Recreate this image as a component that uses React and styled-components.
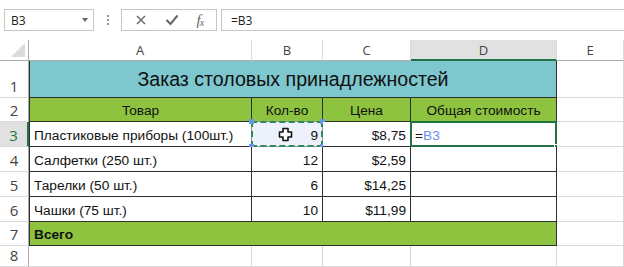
import React from "react";
import styled, { createGlobalStyle, css } from "styled-components";

const Global = createGlobalStyle`
  html, body { margin: 0; padding: 0; background: #fff; }
  body { font-family: "Liberation Sans", Arial, sans-serif; overflow: hidden; }
  * { box-sizing: border-box; }
`;

const Page = styled.div`
  width: 624px;
  height: 267px;
  overflow: hidden;
  background: #fff;
`;

/* ---------- formula bar ---------- */
const FormulaBar = styled.div`
  height: 40px;
  display: flex;
  align-items: flex-start;
  padding: 9px 0 0 4px;
`;

const NameBox = styled.div`
  width: 90px;
  height: 22px;
  border: 1px solid #c6c6c6;
  display: flex;
  align-items: center;
  justify-content: space-between;
  padding: 0 5px 0 6px;
  font-family: "Open Sans", "Liberation Sans", sans-serif;
  font-size: 12px;
  color: #222;
`;

const Caret = styled.span`
  width: 0;
  height: 0;
  border-left: 3.5px solid transparent;
  border-right: 3.5px solid transparent;
  border-top: 4px solid #666;
`;

const Grip = styled.div`
  width: 27px;
  height: 22px;
  display: flex;
  flex-direction: column;
  align-items: center;
  justify-content: center;
  gap: 2px;
  & > i { width: 2px; height: 2px; background: #9a9a9a; display: block; }
`;

const ButtonGroup = styled.div`
  width: 96px;
  height: 22px;
  border: 1px solid #c6c6c6;
  display: flex;
  align-items: center;
  justify-content: space-around;
  padding: 0 4px;
  color: #666;
`;

const Fx = styled.span`
  font-family: "Liberation Serif", serif;
  font-style: italic;
  font-size: 15px;
  line-height: 1;
  color: #666;
  letter-spacing: -1px;
  & sub { font-size: 10px; vertical-align: -1px; }
`;

const FormulaInput = styled.div`
  flex: 1;
  margin-left: 4px;
  height: 22px;
  border: 1px solid #c6c6c6;
  border-right: none;
  display: flex;
  align-items: center;
  padding-left: 9px;
  font-family: "Open Sans", "Liberation Sans", sans-serif;
  font-size: 12px;
  color: #222;
`;

/* ---------- sheet grid ---------- */
const Sheet = styled.div`
  display: grid;
  grid-template-columns: 29px 223px 71px 88px 146px 67px;
  grid-template-rows: 21px 37px 24px 25px 25px 25px 25px 24px 21px;
`;

const ColHead = styled.div`
  position: relative;
  display: flex;
  align-items: center;
  justify-content: center;
  font-family: "Open Sans", "Liberation Sans", sans-serif;
  font-size: 13px;
  color: #444;
  background: ${(p) => (p.$active ? "#e1e1e1" : "#fff")};
  border-right: 1px solid #dadada;
  border-bottom: ${(p) => (p.$active ? "2px solid #217346" : "1px solid #ababab")};
`;

const Corner = styled(ColHead)`
  align-items: flex-end;
  justify-content: flex-end;
  padding: 0 3px 3px 0;
  border-right: 1px solid #ababab;
`;

const RowHead = styled.div`
  display: flex;
  align-items: flex-end;
  justify-content: center;
  padding-bottom: 1px;
  font-family: "Open Sans", "Liberation Sans", sans-serif;
  font-size: 15px;
  color: ${(p) => (p.$active ? "#217346" : "#444")};
  background: ${(p) => (p.$active ? "#e1e1e1" : "#fff")};
  border-right: ${(p) => (p.$active ? "2px solid #217346" : "1px solid #ababab")};
  border-bottom: 1px solid #dadada;
`;

const dark = "#2f2f2f";

const Cell = styled.div`
  position: relative;
  display: flex;
  align-items: flex-end;
  padding: 0 4px 3px 4px;
  font-size: 13.7px;
  color: #111;
  white-space: nowrap;
  grid-column: ${(p) => p.$span || "auto"};
  justify-content: ${(p) =>
    p.$align === "right" ? "flex-end" : p.$align === "center" ? "center" : "flex-start"};
  background: ${(p) => p.$bg || "#fff"};
  border-right: 1px solid ${(p) => (p.$table ? dark : "#d9d9d9")};
  border-bottom: 1px solid ${(p) => (p.$table ? dark : "#d9d9d9")};
  ${(p) => p.$first && css`border-left: 1px solid ${dark};`}
  ${(p) => p.$bold && css`font-weight: bold;`}
`;

const Title = styled(Cell)`
  justify-content: center;
  font-size: 19.6px;
  padding-bottom: 6px;
`;

const Copy = styled.span`
  position: absolute;
  left: -1px;
  top: -1px;
  right: -1px;
  bottom: -1px;
  border: 2px dashed #2f8a5a;
  background: rgba(220, 230, 250, 0.55);
  pointer-events: none;
`;

const Handle = styled.span`
  position: absolute;
  width: 5px;
  height: 5px;
  background: #6b98e6;
  ${(p) => (p.$top ? "top: -3px;" : "bottom: -3px;")}
  ${(p) => (p.$left ? "left: -3px;" : "right: -3px;")}
`;

const Selected = styled.span`
  position: absolute;
  left: -1px;
  top: -1px;
  right: -1px;
  bottom: -1px;
  border: 2px solid #217346;
  pointer-events: none;
`;

const FillHandle = styled.span`
  position: absolute;
  right: -3px;
  bottom: -3px;
  width: 5px;
  height: 5px;
  background: #217346;
  border: 1px solid #fff;
`;

const Ref = styled.span`
  color: #6c8ef0;
`;

const Value = styled.span`
  position: relative;
`;

const Cursor = styled.svg`
  position: absolute;
  left: 26px;
  top: 5px;
`;

const tableRows = [
  ["Салфетки (250 шт.)", "12", "$2,59"],
  ["Тарелки (50 шт.)", "6", "$14,25"],
  ["Чашки (75 шт.)", "10", "$11,99"],
];

export default function App() {
  return (
    <Page>
      <Global />
      <FormulaBar>
        <NameBox>
          B3
          <Caret />
        </NameBox>
        <Grip>
          <i />
          <i />
          <i />
        </Grip>
        <ButtonGroup>
          <svg width="12" height="12" viewBox="0 0 12 12">
            <path d="M2 2 L10 10 M10 2 L2 10" stroke="#666" strokeWidth="1.4" />
          </svg>
          <svg width="14" height="12" viewBox="0 0 14 12">
            <path d="M1.5 6 L5.5 10 L12.5 1.5" stroke="#666" strokeWidth="2" fill="none" />
          </svg>
          <Fx>
            f<sub>x</sub>
          </Fx>
        </ButtonGroup>
        <FormulaInput>=B3</FormulaInput>
      </FormulaBar>

      <Sheet>
        <Corner>
          <svg width="14" height="14" viewBox="0 0 14 14">
            <path d="M14 0 L14 14 L0 14 Z" fill="#dcdcdc" />
          </svg>
        </Corner>
        <ColHead>A</ColHead>
        <ColHead>B</ColHead>
        <ColHead>C</ColHead>
        <ColHead $active>D</ColHead>
        <ColHead>E</ColHead>

        <RowHead>1</RowHead>
        <Title $table $first $span="span 4" $bg="#7fc7cf">
          Заказ столовых принадлежностей
        </Title>
        <Cell />

        <RowHead>2</RowHead>
        <Cell $table $first $align="center" $bg="#8dc33f">Товар</Cell>
        <Cell $table $align="center" $bg="#8dc33f">Кол-во</Cell>
        <Cell $table $align="center" $bg="#8dc33f">Цена</Cell>
        <Cell $table $align="center" $bg="#8dc33f">Общая стоимость</Cell>
        <Cell />

        <RowHead $active>3</RowHead>
        <Cell $table $first>Пластиковые приборы (100шт.)</Cell>
        <Cell $table $align="right">
          <Copy />
          <Handle $top $left />
          <Handle $top />
          <Handle $left />
          <Handle />
          <Cursor width="15" height="15" viewBox="0 0 15 15">
            <path
              d="M5 1.5 H10 V5 H13.5 V10 H10 V13.5 H5 V10 H1.5 V5 H5 Z"
              fill="#fff"
              stroke="#111"
              strokeWidth="1.6"
              strokeLinejoin="round"
            />
          </Cursor>
          <Value>9</Value>
        </Cell>
        <Cell $table $align="right">$8,75</Cell>
        <Cell $table>
          <Selected />
          <FillHandle />
          <span>
            =<Ref>B3</Ref>
          </span>
        </Cell>
        <Cell />

        {tableRows.map((r, i) => (
          <React.Fragment key={r[0]}>
            <RowHead>{i + 4}</RowHead>
            <Cell $table $first>{r[0]}</Cell>
            <Cell $table $align="right">{r[1]}</Cell>
            <Cell $table $align="right">{r[2]}</Cell>
            <Cell $table />
            <Cell />
          </React.Fragment>
        ))}

        <RowHead>7</RowHead>
        <Cell $table $first $bold $span="span 4" $bg="#8dc33f">
          Всего
        </Cell>
        <Cell />

        <RowHead>8</RowHead>
        <Cell />
        <Cell />
        <Cell />
        <Cell />
        <Cell />
      </Sheet>
    </Page>
  );
}
